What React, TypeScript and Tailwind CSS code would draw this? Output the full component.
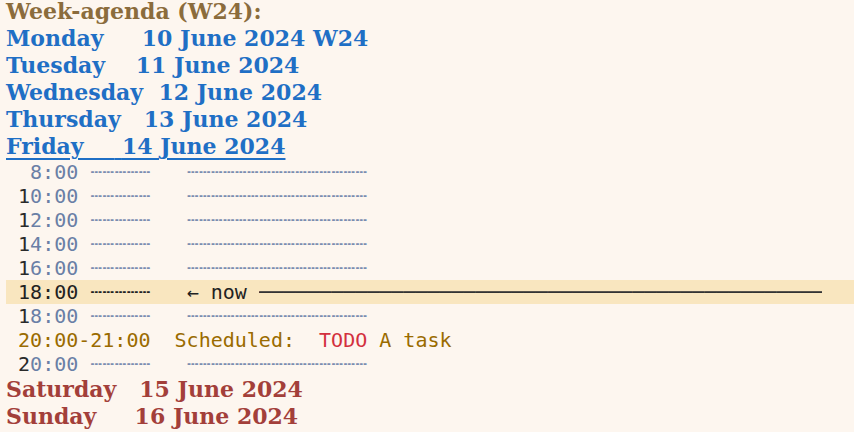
import React from 'react';

const serif = "font-['DejaVu_Serif','Liberation_Serif',serif] font-bold text-[22px] h-[27px] leading-[27px] whitespace-pre";
const mono = "font-['DejaVu_Sans_Mono','Liberation_Mono',monospace] text-[20px] h-[24px] leading-[24px] whitespace-pre";

const SHORT = '┄┄┄┄┄';
const LONG = '┄'.repeat(15);

type Day = { name: string; date: string; color: string; underline?: boolean };

const weekdays: Day[] = [
    { name: 'Monday    ', date: '10 June 2024 W24', color: 'text-[#1f6fc5]' },
    { name: 'Tuesday   ', date: '11 June 2024', color: 'text-[#1f6fc5]' },
    { name: 'Wednesday ', date: '12 June 2024', color: 'text-[#1f6fc5]' },
    { name: 'Thursday  ', date: '13 June 2024', color: 'text-[#1f6fc5]' },
    { name: 'Friday    ', date: '14 June 2024', color: 'text-[#1f6fc5]', underline: true },
];

const weekend: Day[] = [
    { name: 'Saturday  ', date: '15 June 2024', color: 'text-[#a33f3a]' },
    { name: 'Sunday    ', date: '16 June 2024', color: 'text-[#a33f3a]' },
];

function DayLine({ d }: { d: Day }) {
    return (
        <div className={`${serif} ${d.color}`}>
            <span className={d.underline ? 'underline decoration-[1.5px] underline-offset-[4px]' : ''}>
                {d.name} {d.date}
            </span>
        </div>
    );
}

// time grid row: first digit may be dark, rest grey-blue
function GridLine({ lead, rest }: { lead: string; rest: string }) {
    return (
        <div className={`${mono} text-[#6a7fa6]`}>
            {' '}
            <span className="text-[#2a2a2a]">{lead}</span>
            {rest} <span className="text-[#7b8db0]">{SHORT}</span>
            {'   '}
            <span className="text-[#7b8db0]">{LONG}</span>
        </div>
    );
}

export default function App() {
    return (
        <div className="w-[854px] h-[432px] overflow-hidden bg-[#fdf6ef]">
            <div className="-mt-[2px] pl-[6px]">
                <div className={`${serif} text-[#8b6c3c]`}>Week-agenda (W24):</div>
                {weekdays.map((d) => (
                    <DayLine key={d.date} d={d} />
                ))}

                <div className={`${mono} text-[#6a7fa6]`}>
                    {'  8:00 '}
                    <span className="text-[#7b8db0]">{SHORT}</span>
                    {'   '}
                    <span className="text-[#7b8db0]">{LONG}</span>
                </div>
                <GridLine lead="1" rest="0:00" />
                <GridLine lead="1" rest="2:00" />
                <GridLine lead="1" rest="4:00" />
                <GridLine lead="1" rest="6:00" />

                {/* current time line */}
                <div className={`${mono} bg-[#f9e6bf] text-[#222222] flex`}>
                    <span>{' 18:00 '}</span>
                    <span>{SHORT}</span>
                    <span>{'   ← now '}</span>
                    <span className="text-[#333333] w-[563px] overflow-hidden">{'─'.repeat(48)}</span>
                </div>

                <GridLine lead="1" rest="8:00" />

                <div className={`${mono} text-[#9a6b00]`}>
                    {' 20:00-21:00  Scheduled:  '}
                    <span className="text-[#d3303e]">TODO</span>
                    {' A task'}
                </div>

                <GridLine lead="2" rest="0:00" />

                {weekend.map((d) => (
                    <DayLine key={d.date} d={d} />
                ))}
            </div>
        </div>
    );
}
